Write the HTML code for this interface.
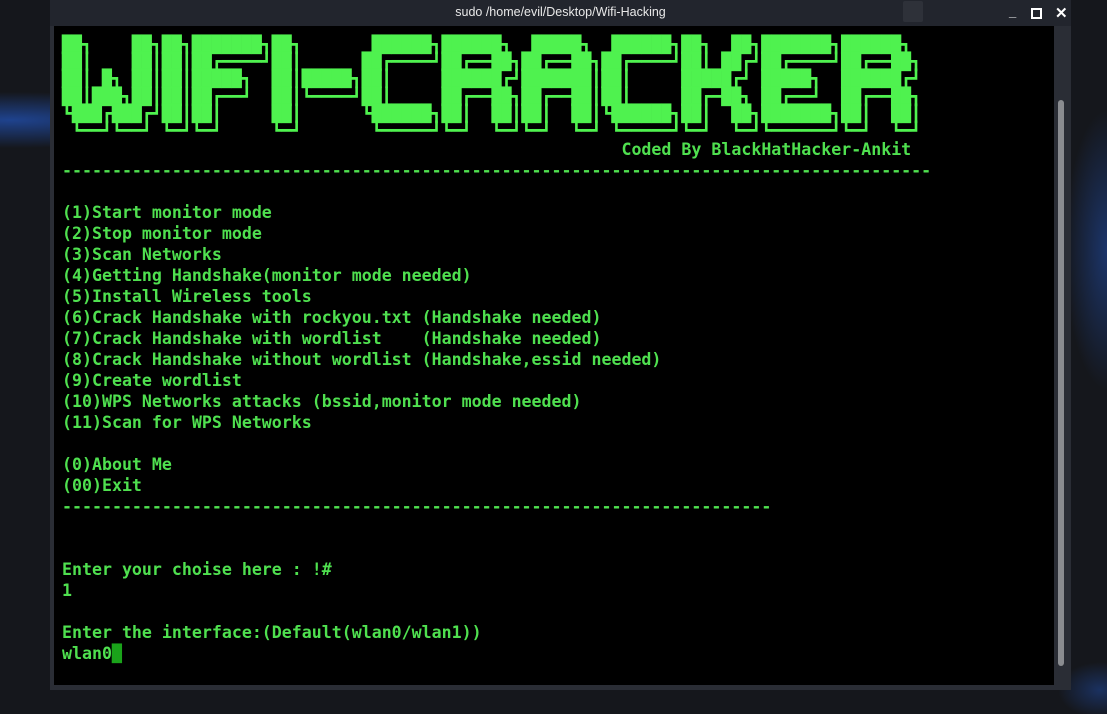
<!DOCTYPE html>
<html><head><meta charset="utf-8"><style>
html,body{margin:0;padding:0}
body{width:1107px;height:714px;overflow:hidden;position:relative;
background:radial-gradient(ellipse 300px 40px at 10px 120px,rgba(40,110,255,.5),transparent 70%),
radial-gradient(ellipse 60px 200px at 1107px 250px,rgba(40,110,255,.35),transparent 70%),
radial-gradient(ellipse 60px 40px at 1100px 690px,rgba(40,110,255,.3),transparent 70%),#15171c;}
.win{position:absolute;left:50px;top:0;width:1021px;height:690px;background:#2a2d35}
.title{position:absolute;left:0;top:0;width:1021px;height:26px;background:#22252d;color:#e8e8e8;font:12.5px "Liberation Sans",sans-serif;text-align:center;line-height:25px}
.term{position:absolute;left:4px;top:26px;width:1000px;height:659px;background:#000;overflow:hidden}
.sb{position:absolute;left:1058px;top:100px;width:6px;height:566px;background:#8a8c90;border-radius:3px}
pre{margin:0;position:absolute;left:8px;font-family:"DejaVu Sans Mono","Liberation Mono",monospace;font-weight:bold;font-size:16.6px;color:#4fe04f;letter-spacing:0}
.ban{top:10px;line-height:17.2px;color:#4ff24f;font-weight:normal}
.txt{top:113px;line-height:21px}
.cur{background:#1aa31a;color:#1aa31a}
.btn{position:absolute;top:6px;color:#fff;font:bold 13px "Liberation Sans",sans-serif}
</style></head><body>
<div class="win">
<div class="title">sudo /home/evil/Desktop/Wifi-Hacking</div>
<div style="position:absolute;left:853px;top:1px;width:20px;height:21px;background:#2e3139;border-radius:2px"></div>
<div class="btn" style="left:959px;top:4px">_</div>
<div class="btn" style="left:981px;width:7px;height:7px;border:2px solid #fff;top:8px"></div>
<div class="btn" style="left:1005px;top:4px;font-size:15px">✕</div>
<div class="term">
<pre class="ban">██┓    ██┓██┓███████┓██┓       ██████┓██████┓  █████┓  ██████┓██┓  ██┓███████┓██████┓ 
██┃    ██┃██┃██┏━━━━┛██┃      ██┏━━━━┛██┏━━██┓██┏━━██┓██┏━━━━┛██┃ ██┏┛██┏━━━━┛██┏━━██┓
██┃ █┓ ██┃██┃█████┓  ██┃█████┓██┃     ██████┏┛███████┃██┃     █████┏┛ █████┓  ██████┏┛
██┃███┓██┃██┃██┏━━┛  ██┃┗━━━━┛██┃     ██┏━━██┓██┏━━██┃██┃     ██┏━██┓ ██┏━━┛  ██┏━━██┓
┗███┏███┏┛██┃██┃     ██┃      ┗██████┓██┃  ██┃██┃  ██┃┗██████┓██┃  ██┓███████┓██┃  ██┃
 ┗━━┛┗━━┛ ┗━┛┗━┛     ┗━┛       ┗━━━━━┛┗━┛  ┗━┛┗━┛  ┗━┛ ┗━━━━━┛┗━┛  ┗━┛┗━━━━━━┛┗━┛  ┗━┛</pre>
<pre class="txt">                                                        Coded By BlackHatHacker-Ankit
---------------------------------------------------------------------------------------

(1)Start monitor mode
(2)Stop monitor mode
(3)Scan Networks
(4)Getting Handshake(monitor mode needed)
(5)Install Wireless tools
(6)Crack Handshake with rockyou.txt (Handshake needed)
(7)Crack Handshake with wordlist    (Handshake needed)
(8)Crack Handshake without wordlist (Handshake,essid needed)
(9)Create wordlist
(10)WPS Networks attacks (bssid,monitor mode needed)
(11)Scan for WPS Networks

(0)About Me
(00)Exit
-----------------------------------------------------------------------


Enter your choise here : !#
1

Enter the interface:(Default(wlan0/wlan1))
wlan0<span class="cur">█</span></pre>
</div>
</div>
<div class="sb"></div>
</body></html>
